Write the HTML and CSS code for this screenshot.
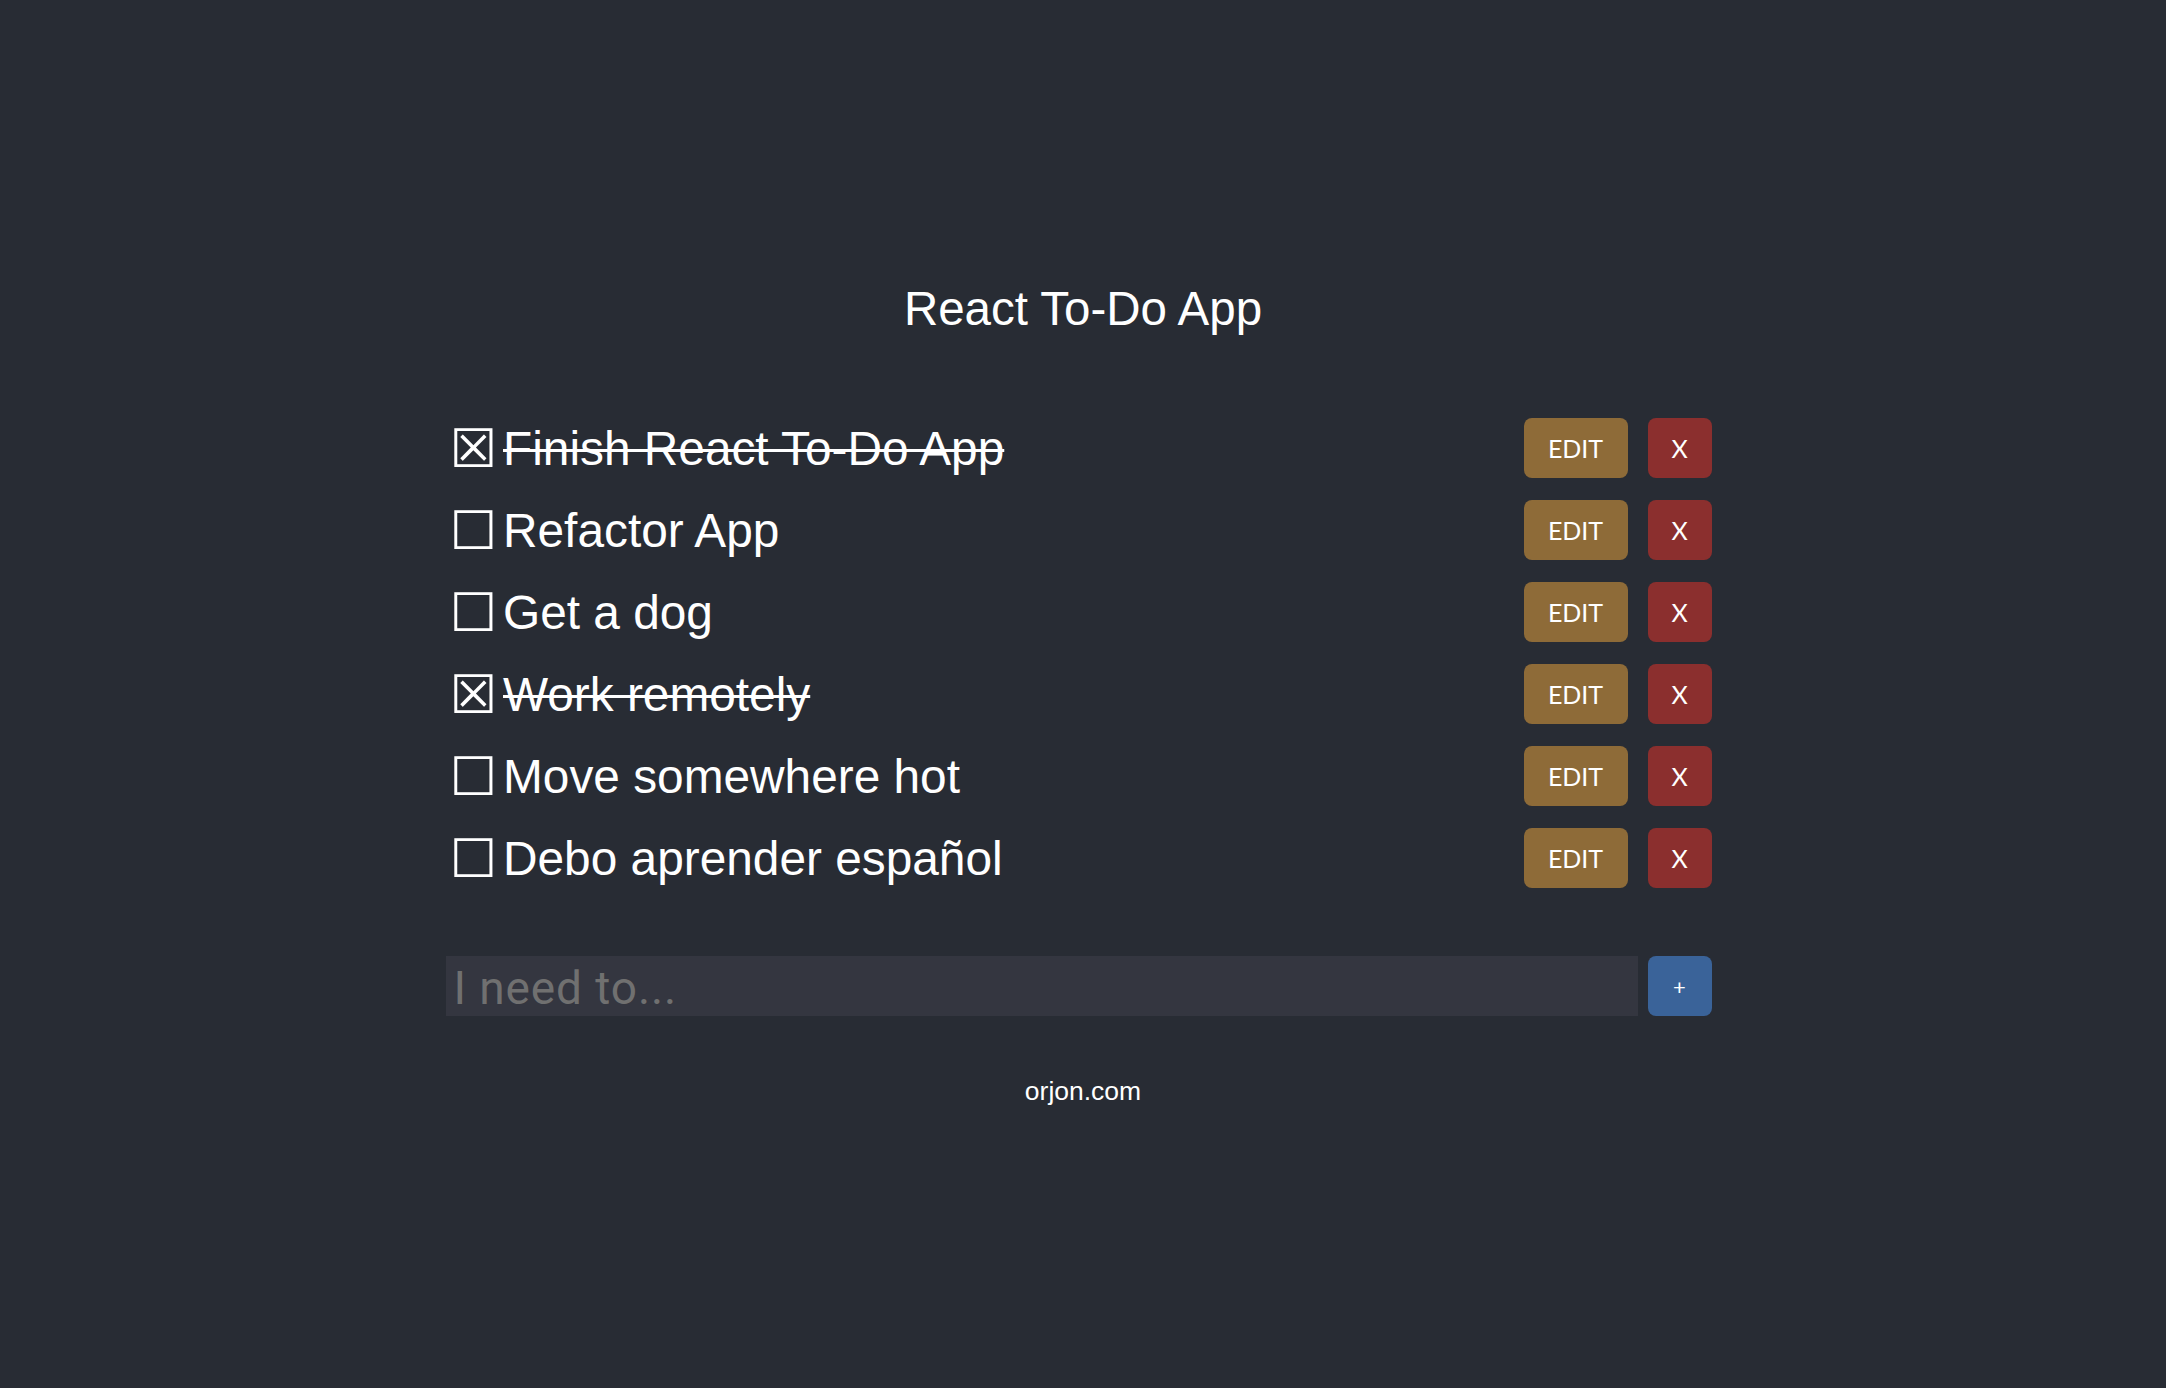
FILE: index.html
```html
<!DOCTYPE html>
<html lang="en">
<head>
<meta charset="utf-8">
<title>React To-Do App</title>
<link rel="stylesheet" href="styles.css">
</head>
<body>
<main class="app">
  <h1 class="title">React To-Do App</h1>
  <div class="board">
    <ul class="list">
      <li class="item done">
        <span class="label"><span class="box">☒</span><span class="text">Finish React To-Do App</span></span>
        <span class="actions"><button class="btn edit">EDIT</button><button class="btn del">X</button></span>
      </li>
      <li class="item">
        <span class="label"><span class="box">☐</span><span class="text">Refactor App</span></span>
        <span class="actions"><button class="btn edit">EDIT</button><button class="btn del">X</button></span>
      </li>
      <li class="item">
        <span class="label"><span class="box">☐</span><span class="text">Get a dog</span></span>
        <span class="actions"><button class="btn edit">EDIT</button><button class="btn del">X</button></span>
      </li>
      <li class="item done">
        <span class="label"><span class="box">☒</span><span class="text">Work remotely</span></span>
        <span class="actions"><button class="btn edit">EDIT</button><button class="btn del">X</button></span>
      </li>
      <li class="item">
        <span class="label"><span class="box">☐</span><span class="text">Move somewhere hot</span></span>
        <span class="actions"><button class="btn edit">EDIT</button><button class="btn del">X</button></span>
      </li>
      <li class="item">
        <span class="label"><span class="box">☐</span><span class="text">Debo aprender español</span></span>
        <span class="actions"><button class="btn edit">EDIT</button><button class="btn del">X</button></span>
      </li>
    </ul>
    <form class="add">
      <input class="add-input" type="text" placeholder="I need to...">
      <button class="btn plus" type="button">+</button>
    </form>
  </div>
  <p class="footer">orjon.com</p>
</main>
</body>
</html>
```
FILE: styles.css
```css
html, body {
  margin: 0;
  padding: 0;
  background: #282c34;
}
body {
  min-height: 1388px;
  color: #ffffff;
  font-family: "Liberation Sans", Arial, sans-serif;
}
.app {
  padding-top: 285px;
}
.title {
  margin: 0;
  font-size: 47.5px;
  line-height: 47px;
  font-weight: normal;
  text-align: center;
}
.board {
  width: 1266px;
  padding-right: 9px;
  margin: 86px auto 0;
}
.list {
  list-style: none;
  margin: 0;
  padding: 0;
  display: flex;
  flex-direction: column;
  gap: 22px;
}
.item {
  height: 60px;
  display: flex;
  align-items: center;
  justify-content: space-between;
  padding-left: 4px;
}
.label {
  font-size: 47.8px;
  line-height: 60px;
  white-space: nowrap;
}
.box {
  font-family: "DejaVu Sans", sans-serif;
  font-size: 53px;
  margin-right: 6px;
  position: relative;
  top: 2px;
}
.done .text {
  text-decoration: line-through;
  text-decoration-thickness: 3px;
}
.actions {
  display: flex;
  gap: 20px;
}
.btn {
  border: none;
  border-radius: 8px;
  height: 60px;
  padding: 0;
  color: #ffffff;
  font-family: Lato, "Open Sans", sans-serif;
  font-size: 25px;
  cursor: pointer;
}
.edit {
  width: 104px;
  background: #8e6b38;
}
.del {
  width: 64px;
  background: #8b2f2e;
}
.add {
  display: flex;
  gap: 10px;
  margin: 68px 0 0;
}
.add-input {
  flex: 1;
  height: 60px;
  box-sizing: border-box;
  border: none;
  outline: none;
  background: #343640;
  padding: 4px 0 0 8px;
  color: #ffffff;
  font-family: Roboto, "Liberation Sans", sans-serif;
  font-size: 46px;
  letter-spacing: 0.9px;
}
.add-input::placeholder {
  color: #707070;
}
.plus {
  width: 64px;
  background: #3a6399;
  font-size: 22px;
}
.footer {
  margin: 62px 0 0;
  text-align: center;
  font-size: 26.5px;
  line-height: 26px;
}
```
